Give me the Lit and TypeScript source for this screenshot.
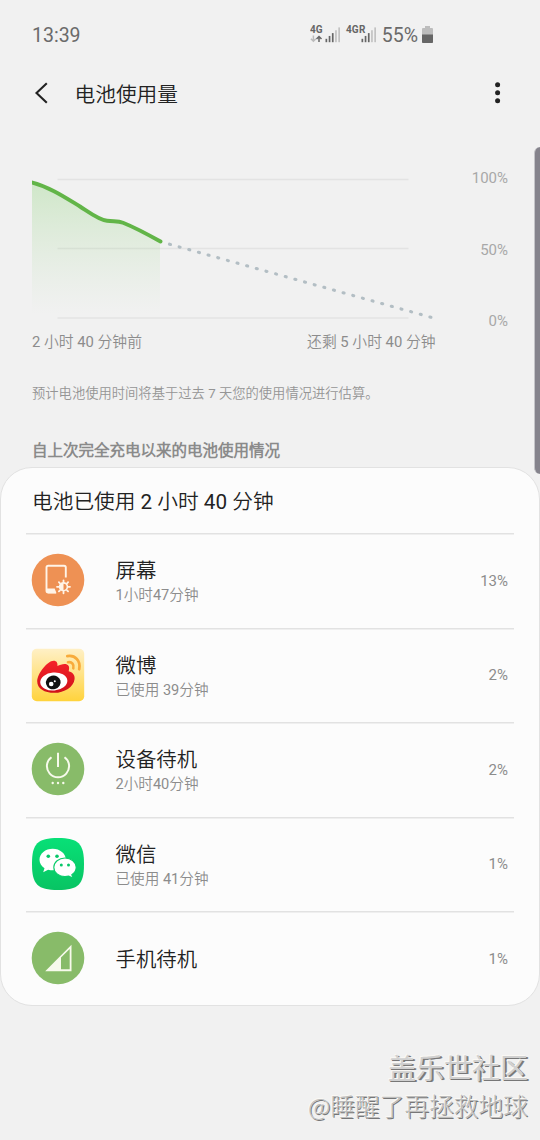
import { LitElement, html, css, svg, TemplateResult } from "lit";
import { customElement, property } from "lit/decorators.js";

interface Usage {
  name: string;
  detail?: string;
  percent: string;
  icon: TemplateResult;
}

const screenIcon = html`<svg viewBox="0 0 54 54" width="54" height="54">
  <circle cx="27" cy="27" r="26.3" fill="#ee9154" />
  <path d="M34.8 24.500V14.6q0-1.8-1.8-1.8H17.3q-1.8 0-1.8 1.8v23.2q0 1.8 1.8 1.8H25" fill="none" stroke="#fff4e8" stroke-width="1.9" />
  <path d="M15.5 35.600h8.200l1.800 4.600h-8.400q-1.6 0-1.6-1.600z" fill="#fff4e8" />
  <g stroke="#fff4e8" stroke-width="1.800" stroke-linecap="round">
    <path d="M32.500 27.300v1.600M32.500 38.700v1.600M26 33.800h1.600M37.400 33.800h1.600M27.900 29.200l1.100 1.100M36 37.300l1.100 1.100M27.900 38.400l1.100-1.100M36 30.300l1.100-1.100" />
    <circle cx="32.500" cy="33.800" r="3.900" fill="none" stroke-width="1.600" />
  </g>
  <path d="M32.500 29.900a3.900 3.900 0 0 0 0 7.800z" fill="#fff4e8" />
</svg>`;

const weiboIcon = html`<svg viewBox="0 0 54 54" width="54" height="54">
  <defs>
    <linearGradient id="wb" x1="0" y1="0" x2="0" y2="1">
      <stop offset="0" stop-color="#fff0c6" />
      <stop offset=".5" stop-color="#ffe284" />
      <stop offset="1" stop-color="#ffd33c" />
    </linearGradient>
    <linearGradient id="wr" x1="0" y1="0" x2="0" y2="1">
      <stop offset="0" stop-color="#f5222a" />
      <stop offset="1" stop-color="#cf1119" />
    </linearGradient>
  </defs>
  <rect x=".8" y=".8" width="52.4" height="52.4" rx="5" fill="url(#wb)" />
  <path d="M6.200 33.200C6.300 25.400 16.400 12.900 22.600 12.700c3 0 4.300 2.200 3.800 5.300 3.400-1.600 8.200-3.200 10.700-.7 1.600 1.700 1 3.500.6 6 3.800 1 6.300 3.600 5.900 7.600C42.700 38.900 33.400 44.800 23.300 44.800 13.600 44.800 6.100 40.600 6.200 33.200z" fill="url(#wr)" />
  <ellipse cx="22.800" cy="33.500" rx="13.600" ry="9" fill="#fff" transform="rotate(-5 22.800 33.500)" />
  <ellipse cx="22.300" cy="34.400" rx="7.400" ry="6.800" fill="#111" transform="rotate(-15 22.300 34.400)" />
  <circle cx="20.200" cy="36" r="2.300" fill="#fff" />
  <circle cx="23.800" cy="33.300" r="1" fill="#fff" />
  <path d="M36.300 8.200C44 6.800 50 12.600 48.200 21.300" fill="none" stroke="#f8ab3b" stroke-width="2.700" stroke-linecap="round" />
  <path d="M37 14.300C41 13.500 43.300 16.500 42.300 20.300" fill="none" stroke="#f8ab3b" stroke-width="2.600" stroke-linecap="round" />
</svg>`;

const powerIcon = html`<svg viewBox="0 0 54 54" width="54" height="54">
  <circle cx="27" cy="27" r="26.3" fill="#88bb69" />
  <g fill="none" stroke="#f7faec" stroke-width="2">
    <path d="M20.500 15.200a11.100 11.100 0 1 0 13 0" />
    <path d="M27 10.700V25" />
  </g>
  <g fill="#f7faec"><circle cx="21.700" cy="41" r="1.200" /><circle cx="27" cy="41" r="1.200" /><circle cx="32.300" cy="41" r="1.200" /></g>
</svg>`;

const wechatIcon = html`<svg viewBox="0 0 54 54" width="54" height="54">
  <defs>
    <linearGradient id="wc" x1="0" y1="0" x2="0" y2="1">
      <stop offset="0" stop-color="#08e077" />
      <stop offset="1" stop-color="#08c463" />
    </linearGradient>
  </defs>
  <path d="M27 1C47.500 1 53 6.500 53 27S47.500 53 27 53 1 47.500 1 27 6.500 1 27 1z" fill="url(#wc)" />
  <path d="M21.700 11.700c-7.300 0-13.200 4.900-13.200 11 0 3.500 1.900 6.500 5 8.500l-1.300 4 4.900-2.500c1.500.4 3 .6 4.600.6 7.300 0 13.200-4.800 13.200-10.700s-5.900-10.900-13.200-10.900z" fill="#fff" />
  <circle cx="17.300" cy="19.200" r="1.800" fill="#08c76a" />
  <circle cx="26" cy="19.200" r="1.800" fill="#08c76a" />
  <path d="M34 21c-6.200 0-11.200 4.200-11.200 9.300S27.800 39.600 34 39.600c1.300 0 2.600-.2 3.800-.5l4.200 2.200-1.200-3.500c2.700-1.700 4.400-4.400 4.400-7.500C45.200 25.200 40.200 21 34 21z" fill="#fff" stroke="#0acd6b" stroke-width="1.100" />
  <circle cx="30.300" cy="27.900" r="1.500" fill="#08c76a" />
  <circle cx="37.500" cy="27.900" r="1.500" fill="#08c76a" />
</svg>`;

const signalIcon = html`<svg viewBox="0 0 54 54" width="54" height="54">
  <circle cx="27" cy="27" r="26.3" fill="#88bb69" />
  <path d="M14.200 40.200L40.500 13.700v26.500zM30 26.600v11.700h8.700V17.900z" fill="#f7faec" fill-rule="evenodd" />
</svg>`;

const usages: Usage[] = [
  { name: "屏幕", detail: "1小时47分钟", percent: "13%", icon: screenIcon },
  { name: "微博", detail: "已使用 39分钟", percent: "2%", icon: weiboIcon },
  { name: "设备待机", detail: "2小时40分钟", percent: "2%", icon: powerIcon },
  { name: "微信", detail: "已使用 41分钟", percent: "1%", icon: wechatIcon },
  { name: "手机待机", percent: "1%", icon: signalIcon },
];

const bars = (x: number) =>
  [0, 1, 2, 3, 4].map(
    (i) => svg`<rect x=${x + i * 3.2} y=${13.8 - i * 2.850} width="1.700" height=${3.400 + i * 2.850} fill=${i < 3 ? "#666" : "#c2c2c2"} />`
  );

@customElement("status-bar")
class StatusBar extends LitElement {
  static styles = css`
    :host {
      display: flex;
      justify-content: space-between;
      align-items: center;
      height: 69px;
      padding: 1px 107px 0 32px;
      box-sizing: border-box;
      color: #6a6a6a;
      font-size: 19.5px;
    }
    .right { display: flex; align-items: center; gap: 4px; }
    .right svg { margin-top: -2px; }
    .tag { font: 700 10px Roboto, sans-serif; fill: #666; }
    svg { display: block; }
  `;
  render() {
    return html`<span>13:39</span>
      <div class="right">
        <svg width="68" height="22" viewBox="0 -2 68 22">
          <text class="tag" x="0" y="8.200" textLength="12.500">4G</text>
          <g fill="none" stroke-width="1.500">
            <path d="M3.400 10.500v5.500M.9 13.700l2.500 2.500 2.500-2.500" stroke="#bbb" />
            <path d="M9 17v-5.500M6.500 14L9 11.500l2.500 2.500" stroke="#666" />
          </g>
          ${bars(15.500)}
          <text class="tag" x="36" y="8.200" textLength="12.500">4G</text>
          <text class="tag" x="49" y="7.500">R</text>
          ${bars(51.500)}
        </svg>
        <span>55%</span>
        <svg width="11" height="17" viewBox="0 0 11 17">
          <path d="M3 0h5v2h2q1 0 1 1v13q0 1-1 1H1q-1 0-1-1V3q0-1 1-1h2z" fill="#bdbdbd" />
          <path d="M0 8.500h11V16q0 1-1 1H1q-1 0-1-1z" fill="#666" />
        </svg>
      </div>`;
  }
}

@customElement("title-bar")
class TitleBar extends LitElement {
  static styles = css`
    :host { display: flex; align-items: center; box-sizing: border-box; height: 48px; padding: 0 36px 0 34px; }
    h1 { margin: 0 auto 0 25.500px; padding-top: 3px; font-size: 20.7px; font-weight: 400; line-height: 30px; color: #222; }
    svg { display: block; }
  `;
  render() {
    return html`<svg width="15" height="24" viewBox="0 0 15 24">
        <path d="M12.800 2.200L2.500 12l10.300 9.800" fill="none" stroke="#222" stroke-width="2.100" />
      </svg>
      <h1>电池使用量</h1>
      <svg width="13" height="24" viewBox="0 0 13 24" fill="#222">
        <circle cx="6.600" cy="3.700" r="2.500" /><circle cx="6.600" cy="11.700" r="2.500" /><circle cx="6.600" cy="19.700" r="2.500" />
      </svg>`;
  }
}

@customElement("battery-chart")
class BatteryChart extends LitElement {
  static styles = css`
    :host { display: block; padding: 51px 32px 0; color: #8c8c8c; }
    .plot { display: flex; justify-content: space-between; height: 163px; }
    .axis {
      display: flex;
      flex-direction: column;
      justify-content: space-between;
      text-align: right;
      font-size: 15px;
      line-height: 20px;
      color: #a8a8a8;
    }
    .times { display: flex; justify-content: space-between; width: 403.5px; margin-top: 1px; font-size: 14.8px; line-height: 20px; }
    .note { margin: 32px 0 0; font-size: 13.3px; line-height: 20px; color: #959595; }
  `;
  render() {
    return html`<div class="plot">
        <svg width="408" height="163" viewBox="32 168 408 163">
          <defs>
            <linearGradient id="fade" x1="0" y1="182" x2="0" y2="314" gradientUnits="userSpaceOnUse">
              <stop offset="0" stop-color="#7fcf68" stop-opacity=".3" />
              <stop offset="1" stop-color="#a5d898" stop-opacity="0" />
            </linearGradient>
          </defs>
          <path d="M57.500 179.400H408.500M57.500 248.400H408.500M57.500 318H408.500" stroke="#e3e3e3" stroke-width="1.500" />
          <path d="M32 182.500C50 187 66 198 80 206.500C90 213 99 220 107 220.800C114 221.700 118 220.800 123 222.700C135 227.500 148 234.500 160 241.300V314H32z" fill="url(#fade)" />
          <path d="M31 182.200C50 187 66 198 80 206.500C90 213 99 220 107 220.800C114 221.700 118 220.800 123 222.700C135 227.500 148 234.500 160.500 241.500" fill="none" stroke="#62b548" stroke-width="3.900" stroke-linecap="round" stroke-linejoin="round" />
          <path d="M169.500 244.200L431 317.300" fill="none" stroke="#b3bec4" stroke-width="3.100" stroke-linecap="round" stroke-dasharray="1 9.015" />
        </svg>
        <div class="axis"><span>100%</span><span>50%</span><span>0%</span></div>
      </div>
      <div class="times"><span>2 小时 40 分钟前</span><span>还剩 5 小时 40 分钟</span></div>
      <p class="note">预计电池使用时间将基于过去 7 天您的使用情况进行估算。</p>`;
  }
}

@customElement("usage-row")
class UsageRow extends LitElement {
  @property({ attribute: false }) item!: Usage;
  static styles = css`
    :host { display: block; height: 94.5px; }
    .line { height: 2px; margin: 0 25px; background: linear-gradient(#e2e2e2 50%, #efefef 50%); }
    .row { display: flex; align-items: center; box-sizing: border-box; height: 92.5px; padding: 0 31px 2px 29.5px; }
    svg { display: block; }
    .text { display: flex; flex-direction: column; flex: 1; margin-left: 31px; padding-top: 3px; }
    .name { font-size: 20.4px; line-height: 28px; color: #222; }
    .detail { font-size: 14.6px; line-height: 21px; color: #8c8c8c; }
    .percent { padding-top: 1.4px; font-size: 15px; color: #8c8c8c; }
  `;
  render() {
    const { name, detail, percent, icon } = this.item;
    return html`<div class="line"></div>
      <div class="row">
        ${icon}
        <div class="text">
          <span class="name">${name}</span>
          ${detail ? html`<span class="detail">${detail}</span>` : ""}
        </div>
        <span class="percent">${percent}</span>
      </div>`;
  }
}

@customElement("app-root")
class AppRoot extends LitElement {
  static styles = css`
    :host {
      display: block;
      position: relative;
      width: 540px;
      height: 1140px;
      overflow: hidden;
      background: #f1f1f1;
      font-family: Roboto, "Noto Sans CJK SC DemiLight", "Noto Sans CJK SC", sans-serif;
    }
    h2 { margin: 37px 0 0 32px; font-size: 15.5px; font-weight: 700; line-height: 20px; color: #8a8a8a; }
    .card {
      box-sizing: border-box;
      height: 539px;
      margin-top: 6px;
      border: 1px solid #e2e2e2;
      border-radius: 32px;
      background: #fcfcfc;
    }
    h3 { box-sizing: border-box; height: 65px; margin: 0; padding: 3px 31px 0; font-size: 20.7px; font-weight: 400; line-height: 62px; color: #222; }
    .scrollbar {
      position: absolute;
      top: 147px;
      right: -6px;
      width: 12px;
      height: 327px;
      border-radius: 6px;
      background: #85838c;
      border-left: 1px solid #c4c4c8;
      box-sizing: border-box;
    }
    .mark {
      position: absolute;
      right: 12px;
      bottom: 16px;
      text-align: right;
      font-family: "Noto Sans CJK SC", sans-serif;
      color: #d0d0d0;
      text-shadow: -1px -1px 0 #faf8f4, 1px 1px 0 #777, 2px 1px 0 #858585;
    }
    .mark div:first-child { font-size: 28px; line-height: 38px; }
    .mark div:last-child {
      font-family: "Noto Sans CJK SC Light", "Noto Sans CJK SC", sans-serif;
      font-size: 24.7px;
      line-height: 38px;
      color: #bdbdbd;
      text-shadow: -1px -1px 0 #faf8f4, 1px 1px 0 #777;
    }
  `;
  render() {
    return html`<status-bar></status-bar>
      <title-bar></title-bar>
      <battery-chart></battery-chart>
      <h2>自上次完全充电以来的电池使用情况</h2>
      <section class="card">
        <h3>电池已使用 2 小时 40 分钟</h3>
        ${usages.map((item) => html`<usage-row .item=${item}></usage-row>`)}
      </section>
      <div class="scrollbar"></div>
      <div class="mark"><div>盖乐世社区</div><div>@睡醒了再拯救地球</div></div>`;
  }
}
